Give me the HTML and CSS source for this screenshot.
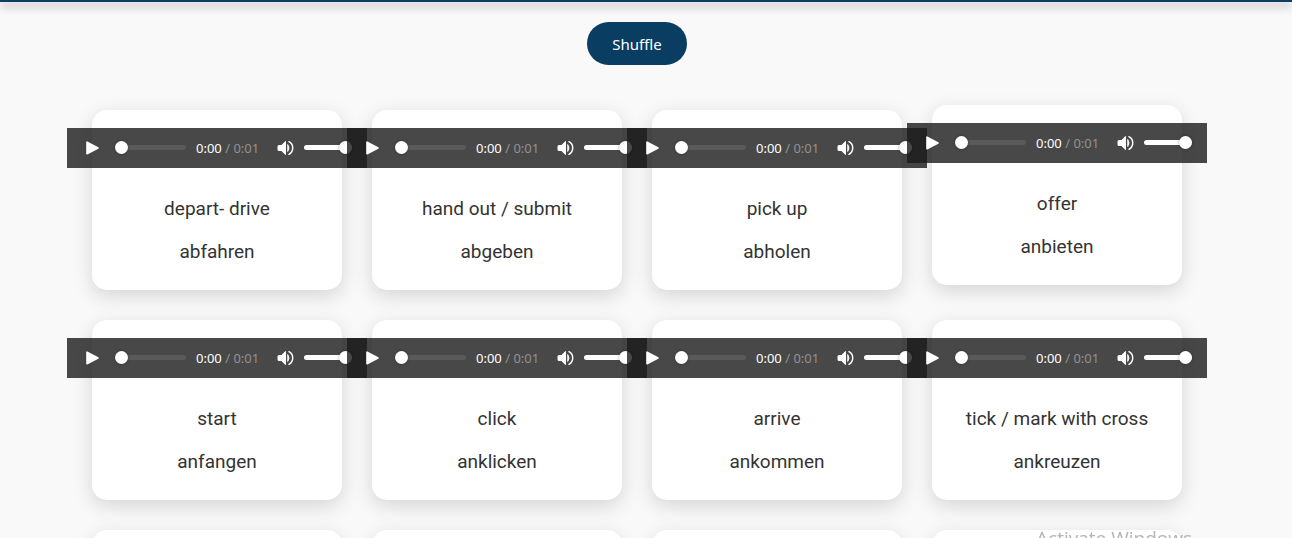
FILE: index.html
```html
<!DOCTYPE html>
<html lang="en">
<head>
    <meta charset="UTF-8">
    <meta name="viewport" content="width=device-width, initial-scale=1.0">
    <title>Verbs</title>
    <link rel="stylesheet" href="styles.css">
</head>
<body>
    <header class="header"></header>
    <main class="main">
        <button class="shuffle" type="button">Shuffle</button>
        <div class="cards"></div>
    </main>
    <div class="watermark">Activate Windows</div>

    <!-- Player markup, cloned into every card -->
    <template id="player">
        <div class="player">
            <button class="play" type="button" aria-label="Play">
                <svg width="14" height="14" viewBox="0 0 14 14"><path d="M1 1.2v11.6L12 7z" fill="#fff" stroke="#fff" stroke-width="1.6" stroke-linejoin="round"/></svg>
            </button>
            <input class="seek" type="range" min="0" max="100" value="0" aria-label="Position">
            <span class="time">0:00 <span class="duration">/ 0:01</span></span>
            <button class="mute" type="button" aria-label="Mute">
                <svg width="17" height="16" viewBox="0 0 17 16">
                    <path d="M2 5H4.500L8 1.500q1-.9 1 .3v12.400q0 1.200-1 .3L4.500 11H2Q.5 11 .5 9.500v-3Q.5 5 2 5z" fill="#fff"/>
                    <path d="M10.700 4.500q2.600 3.500 0 7z" fill="#fff" stroke="#fff" stroke-width=".8"/>
                    <path d="M12 1.700a7.200 7.200 0 0 1 0 12.600" fill="none" stroke="#fff" stroke-width="1.500" stroke-linecap="round"/>
                </svg>
            </button>
            <input class="volume" type="range" min="0" max="100" value="100" aria-label="Volume">
        </div>
    </template>

    <script src="script.js"></script>
</body>
</html>
```

FILE: styles.css
```css
* {
    margin: 0;
    padding: 0;
    box-sizing: border-box;
}

body {
    height: 100vh;
    overflow: hidden;
    font-family: Roboto, Arial, sans-serif;
    background: #f9f9f9;
    color: #333;
}

.header {
    height: 2px;
    background: #0a3d62;
    box-shadow: 0 4px 8px rgba(0, 0, 0, 0.5);
}

.main {
    display: flex;
    flex-direction: column;
    align-items: center;
    gap: 45px;
    padding: 20px 18px 20px 0;
}

.shuffle {
    height: 43px;
    padding: 0 25px;
    border: none;
    border-radius: 22px;
    background: #0a3d62;
    color: #fff;
    font-family: "Noto Sans", sans-serif;
    font-size: 15px;
    cursor: pointer;
}

.cards {
    display: flex;
    flex-wrap: wrap;
    justify-content: center;
    gap: 30px;
    max-width: 1200px;
}

.card {
    display: flex;
    flex-direction: column;
    align-items: center;
    width: 250px;
    min-height: 180px;
    padding: 18px 20px 6px;
    border-radius: 15px;
    background: #fff;
    box-shadow: 0 6px 20px rgba(0, 0, 0, 0.15);
    font-size: 19px;
    line-height: 22px;
    text-align: center;
}

.card.active {
    transform: translateY(-5px);
}

.word {
    white-space: nowrap;
    margin-bottom: 21px;
}

.player {
    position: relative;
    display: flex;
    flex-shrink: 0;
    align-items: center;
    width: 300px;
    height: 40px;
    margin-bottom: 30px;
    padding: 0 15px 1px 19px;
    background: rgba(26, 26, 26, 0.8);
}

.player button {
    display: flex;
    border: none;
    background: none;
}

.player input {
    appearance: none;
    height: 13px;
    background: none;
}

.player input::-webkit-slider-runnable-track {
    height: 5px;
    border-radius: 3px;
    background: #5a5a5a;
}

.player input::-webkit-slider-thumb {
    appearance: none;
    width: 13px;
    height: 13px;
    margin-top: -4px;
    border-radius: 50%;
    background: #fff;
    box-shadow: 0 0 3px rgba(0, 0, 0, 0.4);
}

.player .volume::-webkit-slider-runnable-track {
    background: #fff;
}

.seek {
    width: 71px;
    margin: 0 10px 0 15px;
}

.time {
    color: #fff;
    font-family: "Noto Sans", sans-serif;
    font-size: 13px;
    line-height: 18px;
    white-space: nowrap;
}

.duration {
    color: #929292;
}

.mute {
    margin: 0 10px 0 18px;
}

.volume {
    width: 48px;
}

.watermark {
    position: fixed;
    right: 100px;
    bottom: -13px;
    color: #b4b4b4;
    font-family: "Open Sans", sans-serif;
    font-size: 19px;
    line-height: 26px;
    pointer-events: none;
}
```

FILE: script.js
```javascript
const words = [
    ['depart- drive', 'abfahren'],
    ['hand out / submit', 'abgeben'],
    ['pick up', 'abholen'],
    ['offer', 'anbieten'],
    ['start', 'anfangen'],
    ['click', 'anklicken'],
    ['arrive', 'ankommen'],
    ['tick / mark with cross', 'ankreuzen'],
    [], [], [], []
];

const cards = document.querySelector('.cards');
const player = document.querySelector('#player');

words.forEach((pair, i) => {
    const card = document.createElement('div');
    card.classList.add('card');
    if (i === 3) {
        card.classList.add('active');
    }

    if (pair.length) {
        card.appendChild(player.content.cloneNode(true));
    }

    pair.forEach((text) => {
        const word = document.createElement('p');
        word.classList.add('word');
        word.textContent = text;
        card.appendChild(word);
    });

    cards.appendChild(card);
});

document.querySelector('.shuffle').addEventListener('click', () => {
    const list = [...cards.children].filter((card) => card.querySelector('.word'));
    list.sort(() => Math.random() - 0.5);
    cards.prepend(...list);
});
```
